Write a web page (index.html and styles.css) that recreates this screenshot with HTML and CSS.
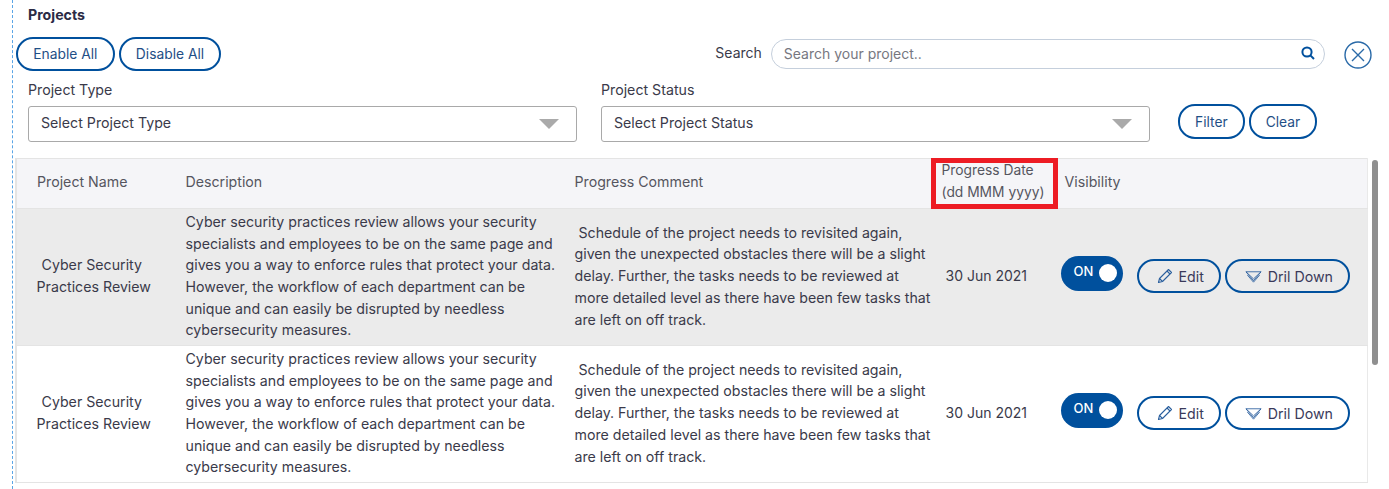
FILE: index.html
```html
<!DOCTYPE html>
<html>

<head>
  <title>Projects</title>
  <link rel="stylesheet" href="styles.css">
</head>

<body>
  <div class="page">
    <h1 class="page-title">Projects</h1>

    <div class="top-row">
      <div class="btn-group">
        <button class="btn">Enable All</button>
        <button class="btn">Disable All</button>
      </div>
      <div class="search-box">
        <label for="search">Search</label>
        <div class="search-input">
          <input id="search" type="text" placeholder="Search your project..">
          <svg width="14" height="14" viewBox="0 0 14 14" fill="none" stroke="#00509d" stroke-width="2">
            <circle cx="6" cy="6" r="4.6"/>
            <path d="M9.4 9.4L13 13"/>
          </svg>
        </div>
      </div>
      <svg class="close-icon" width="28" height="28" viewBox="0 0 28 28" fill="none" stroke="#2a6aa8" stroke-width="1.4">
        <circle cx="14" cy="14" r="13"/>
        <path d="M8 8L20 20M20 8L8 20"/>
      </svg>
    </div>

    <div class="filter-row">
      <div class="field">
        <label>Project Type</label>
        <div class="select">Select Project Type<span class="caret"></span></div>
      </div>
      <div class="field">
        <label>Project Status</label>
        <div class="select">Select Project Status<span class="caret"></span></div>
      </div>
      <div class="btn-group filter-btns">
        <button class="btn">Filter</button>
        <button class="btn">Clear</button>
      </div>
    </div>

    <div class="table-wrap">
      <table class="project-table">
        <colgroup>
          <col class="col-name">
          <col class="col-desc">
          <col class="col-comment">
          <col class="col-date">
          <col class="col-visibility">
        </colgroup>
        <thead>
          <tr>
            <th class="th-name">Project Name</th>
            <th>Description</th>
            <th class="th-comment">Progress Comment</th>
            <th class="th-date">Progress Date<br>(dd MMM yyyy)<span class="highlight"></span></th>
            <th>Visibility</th>
          </tr>
        </thead>
        <tbody>
          <tr class="selected">
            <td class="td-name">Cyber Security&nbsp; Practices Review</td>
            <td class="td-desc">Cyber security practices review allows your security specialists and employees to be on the same page and gives you a way to enforce rules that protect your data. However, the workflow of each department can be unique and can easily be disrupted by needless cybersecurity measures.</td>
            <td class="td-comment">&nbsp;Schedule of the project needs to revisited again, given the unexpected obstacles there will be a slight delay. Further, the tasks needs to be reviewed at more detailed level as there have been few tasks that are left on off track.</td>
            <td class="td-date">30 Jun 2021</td>
            <td>
              <div class="actions">
                <div class="toggle">ON<span class="knob"></span></div>
                <button class="btn btn-icon">
                  <svg width="16" height="16" viewBox="0 0 16 16" fill="none" stroke="#2a5f9e" stroke-width="1.1" stroke-linejoin="round">
                    <path d="M1.5 14.5L2.5 10.5L11.5 1.5L14.5 4.5L5.5 13.5Z"/>
                    <path d="M2.5 10.5L5.5 13.5M10 3L13 6"/>
                  </svg>
                  Edit
                </button>
                <button class="btn btn-icon">
                  <svg width="17" height="13" viewBox="0 0 18 13" fill="none" stroke="#2a5f9e" stroke-width="0.9" stroke-linejoin="round">
                    <path d="M1 1.5H17L9 9Z"/>
                    <path d="M1 1.5L9 11L17 1.5"/>
                    <path d="M2.5 5L9 12.5L15.5 5"/>
                  </svg>
                  Dril Down
                </button>
              </div>
            </td>
          </tr>
          <tr>
            <td class="td-name">Cyber Security&nbsp; Practices Review</td>
            <td class="td-desc">Cyber security practices review allows your security specialists and employees to be on the same page and gives you a way to enforce rules that protect your data. However, the workflow of each department can be unique and can easily be disrupted by needless cybersecurity measures.</td>
            <td class="td-comment">&nbsp;Schedule of the project needs to revisited again, given the unexpected obstacles there will be a slight delay. Further, the tasks needs to be reviewed at more detailed level as there have been few tasks that are left on off track.</td>
            <td class="td-date">30 Jun 2021</td>
            <td>
              <div class="actions">
                <div class="toggle">ON<span class="knob"></span></div>
                <button class="btn btn-icon">
                  <svg width="16" height="16" viewBox="0 0 16 16" fill="none" stroke="#2a5f9e" stroke-width="1.1" stroke-linejoin="round">
                    <path d="M1.5 14.5L2.5 10.5L11.5 1.5L14.5 4.5L5.5 13.5Z"/>
                    <path d="M2.5 10.5L5.5 13.5M10 3L13 6"/>
                  </svg>
                  Edit
                </button>
                <button class="btn btn-icon">
                  <svg width="17" height="13" viewBox="0 0 18 13" fill="none" stroke="#2a5f9e" stroke-width="0.9" stroke-linejoin="round">
                    <path d="M1 1.5H17L9 9Z"/>
                    <path d="M1 1.5L9 11L17 1.5"/>
                    <path d="M2.5 5L9 12.5L15.5 5"/>
                  </svg>
                  Dril Down
                </button>
              </div>
            </td>
          </tr>
        </tbody>
      </table>
      <div class="scrollbar"></div>
    </div>
  </div>
</body>

</html>
```

FILE: styles.css
```css
* {
  font-family: 'Inter', sans-serif;
  margin: 0;
  padding: 0;
  box-sizing: border-box;
}

html,
body {
  height: 489px;
  overflow: hidden;
  background-color: #fff;
}

.page {
  height: 489px;
  margin-left: 12px;
  padding-left: 3px;
  border-left: 1px dashed #5aa5e6;
  color: #3a3a4a;
  font-size: 14.2px;
}

.page-title {
  font-size: 14.2px;
  font-weight: 700;
  color: #2b2b45;
  line-height: 17px;
  padding: 6px 0 0 12px;
}

.top-row {
  display: flex;
  align-items: center;
  height: 34px;
  margin-top: 14px;
}

.btn-group {
  display: flex;
  gap: 4px;
}

.btn {
  height: 34px;
  padding: 0 15.25px;
  background-color: transparent;
  border: 2px solid #00509d;
  border-radius: 17px;
  color: #1f4f86;
  font-size: 13.8px;
  cursor: pointer;
}

.search-box {
  display: flex;
  align-items: center;
  margin-left: 494px;
}

.search-box label {
  margin: 0 9px 4px 0;
  color: #3a3a4a;
  font-size: 14px;
}

.search-input {
  display: flex;
  align-items: center;
  width: 554px;
  height: 30px;
  padding: 0 9px 0 12px;
  border: 1px solid #c5cfdc;
  border-radius: 15px;
}

.search-input svg {
  margin-bottom: 3px;
}

.search-input input {
  flex: 1;
  border: none;
  outline: none;
  font-size: 14px;
  padding-bottom: 1px;
}

.search-input input::placeholder {
  color: #77777f;
}

.close-icon {
  margin-left: 19px;
  margin-top: 2px;
}

.filter-row {
  display: flex;
  margin-top: 9px;
  padding-left: 12px;
}

.field {
  width: 549px;
  margin-right: 24px;
}

.field label {
  display: block;
  height: 26px;
  line-height: 20px;
}

.select {
  position: relative;
  height: 36px;
  line-height: 32px;
  padding-left: 12px;
  border: 1px solid #a9a9a9;
  border-radius: 3px;
  color: #3a3a4a;
}

.caret {
  position: absolute;
  right: 17px;
  top: 12px;
  border-left: 10px solid transparent;
  border-right: 10px solid transparent;
  border-top: 10px solid #aaa;
}

.filter-btns {
  margin: 24px 0 0 4px;
}

.filter-btns .btn {
  height: 35px;
  padding: 0 15px;
}

.table-wrap {
  display: flex;
  margin-top: 16px;
}

.project-table {
  width: 1352px;
  height: 325px;
  table-layout: fixed;
  border-collapse: collapse;
  border: 1px solid #e4e4e4;
  border-right-color: #e9e9e9;
  box-shadow: -1px 0 0 #e4e4e4;
  line-height: 21.7px;
}

.col-name { width: 154px; }
.col-desc { width: 390px; }
.col-comment { width: 370px; }
.col-date { width: 119px; }

.project-table th {
  height: 50px;
  padding: 0 10px 4px 15px;
  background-color: #f5f5f8;
  font-weight: 400;
  color: #55555f;
  text-align: left;
  border-bottom: 1px solid #e4e4e4;
}

.project-table th.th-name {
  padding-left: 20px;
}

.project-table th.th-comment {
  padding-left: 14px;
}

.project-table th.th-date {
  position: relative;
  padding-left: 11px;
  padding-right: 0;
  font-size: 13.8px;
  white-space: nowrap;
}

.highlight {
  position: absolute;
  left: 0;
  top: -1px;
  width: 127px;
  height: 51px;
  border: 5px solid #ed1c24;
}

.project-table td {
  height: 137px;
  padding: 0 10px 2px 14px;
  color: #3a3a4a;
  border-bottom: 1px solid #e4e4e4;
}

.project-table td.td-name {
  padding: 0 14px 2px 14px;
  text-align: center;
}

.project-table td.td-desc {
  padding-left: 15px;
  padding-right: 0;
}

.project-table td.td-comment {
  padding-right: 0;
}

.project-table td.td-date {
  padding-left: 15px;
  font-size: 14px;
  white-space: nowrap;
}

.selected td {
  background-color: #ebebeb;
}

.actions {
  display: flex;
  align-items: center;
  margin-left: -3px;
}

.toggle {
  display: flex;
  align-items: center;
  justify-content: space-between;
  width: 62px;
  height: 35px;
  padding: 0 6px 3px 13px;
  margin: 0 14px 6px 0;
  background-color: #00509d;
  border-radius: 18px;
  color: #fff;
  font-size: 13px;
  font-weight: 500;
}

.knob {
  width: 18px;
  height: 18px;
  margin-top: 3px;
  background-color: #fff;
  border-radius: 50%;
}

.btn-icon {
  display: flex;
  align-items: center;
  gap: 6px;
  padding: 0 15px 0 18px;
  margin-right: 4px;
  font-size: 14.2px;
  white-space: nowrap;
  color: #3a3a5a;
}

.scrollbar {
  width: 6px;
  height: 205px;
  margin: 2px 0 0 4px;
  background-color: #8f8f8f;
  border-radius: 3px;
}
```
